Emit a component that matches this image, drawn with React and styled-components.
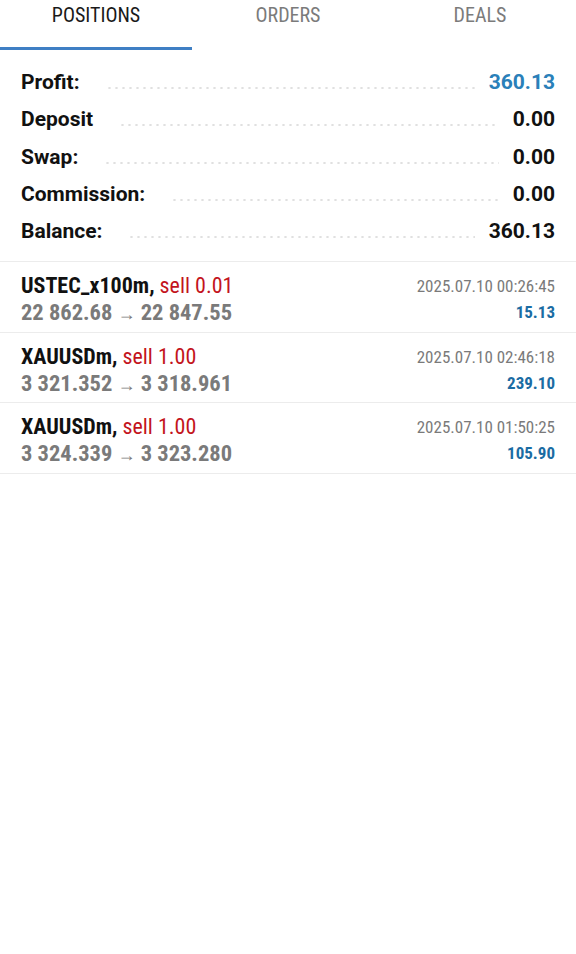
import { useState } from "react";
import styled, { createGlobalStyle } from "styled-components";

const summary = [
  { label: "Profit:", value: "360.13", accent: true },
  { label: "Deposit", value: "0.00" },
  { label: "Swap:", value: "0.00" },
  { label: "Commission:", value: "0.00" },
  { label: "Balance:", value: "360.13" },
];

const positions = [
  {
    symbol: "USTEC_x100m",
    side: "sell 0.01",
    open: "22 862.68",
    close: "22 847.55",
    time: "2025.07.10 00:26:45",
    profit: "15.13",
  },
  {
    symbol: "XAUUSDm",
    side: "sell 1.00",
    open: "3 321.352",
    close: "3 318.961",
    time: "2025.07.10 02:46:18",
    profit: "239.10",
  },
  {
    symbol: "XAUUSDm",
    side: "sell 1.00",
    open: "3 324.339",
    close: "3 323.280",
    time: "2025.07.10 01:50:25",
    profit: "105.90",
  },
];

function App() {
  const [activeTab, setActiveTab] = useState("positions");

  return (
    <Page>
      <GlobalStyle />
      <Tabs>
        {["positions", "orders", "deals"].map((tab) => (
          <Tab
            key={tab}
            $active={activeTab === tab}
            onClick={() => setActiveTab(tab)}
          >
            {tab.toUpperCase()}
          </Tab>
        ))}
      </Tabs>

      <Summary>
        {summary.map((row) => (
          <SummaryRow key={row.label}>
            <Label>{row.label}</Label>
            <Leader />
            <Value $accent={row.accent}>{row.value}</Value>
          </SummaryRow>
        ))}
      </Summary>

      <List>
        {positions.map((p) => (
          <Position key={p.time}>
            <Left>
              <Title>
                {p.symbol}, <Side>{p.side}</Side>
              </Title>
              <Prices>
                {p.open} <Arrow>→</Arrow> {p.close}
              </Prices>
            </Left>
            <Right>
              <Time>{p.time}</Time>
              <Profit>{p.profit}</Profit>
            </Right>
          </Position>
        ))}
      </List>
    </Page>
  );
}

const GlobalStyle = createGlobalStyle`
  body {
    margin: 0;
    background: #fff;
    font-family: Roboto, "Noto Sans", sans-serif;
  }
`;

const Page = styled.div`
  width: 576px;
  min-height: 954px;
  background: #fff;
`;

const Tabs = styled.div`
  display: grid;
  grid-template-columns: repeat(3, 1fr);
  height: 50px;
`;

const Tab = styled.div`
  font-family: "Roboto Condensed", Roboto, sans-serif;
  font-size: 20px;
  line-height: 31px;
  text-align: center;
  color: ${(p) => (p.$active ? "#1a1a1a" : "#7b7b7b")};
  border-bottom: 3px solid ${(p) => (p.$active ? "#3f7fc4" : "transparent")};
  cursor: pointer;
`;

const Summary = styled.div`
  padding: 14px 21px 11px;
`;

const SummaryRow = styled.div`
  display: flex;
  align-items: baseline;
  height: 37.3px;
  line-height: 37px;
  font-size: 21px;
  font-weight: 700;
`;

const Label = styled.span`
  color: #111;
`;

const Leader = styled.span`
  flex: 1;
  align-self: stretch;
  margin: 0 14px 0 26px;
  background-image: radial-gradient(circle, #e0e0e0 1px, transparent 1.3px);
  background-size: 7px 4px;
  background-repeat: repeat-x;
  background-position: 0 22px;
`;

const Value = styled.span`
  color: ${(p) => (p.$accent ? "#2a80b9" : "#111")};
`;

const List = styled.div`
  border-top: 1px solid #ececec;
`;

const Position = styled.div`
  display: flex;
  justify-content: space-between;
  box-sizing: border-box;
  height: 70.5px;
  padding: 11px 21px 0;
  border-bottom: 1px solid #ececec;
  font-family: "Roboto Condensed", Roboto, sans-serif;
`;

const Left = styled.div`
  display: flex;
  flex-direction: column;
`;

const Title = styled.div`
  height: 26px;
  font-size: 22px;
  line-height: 26px;
  font-weight: 700;
  color: #111;
`;

const Side = styled.span`
  font-weight: 400;
  color: #c3141c;
`;

const Prices = styled.div`
  height: 26px;
  font-size: 22.5px;
  line-height: 26px;
  font-weight: 700;
  color: #7a7a7a;
`;

const Arrow = styled.span`
  font-size: 18px;
  line-height: 1;
  font-weight: 400;
`;

const Right = styled.div`
  display: flex;
  flex-direction: column;
  align-items: flex-end;
`;

const Time = styled.div`
  height: 26px;
  font-size: 17px;
  line-height: 26px;
  color: #7a7a7a;
`;

const Profit = styled.div`
  height: 26px;
  font-size: 17px;
  line-height: 26px;
  font-weight: 700;
  color: #1b6ca3;
`;

export default App;
